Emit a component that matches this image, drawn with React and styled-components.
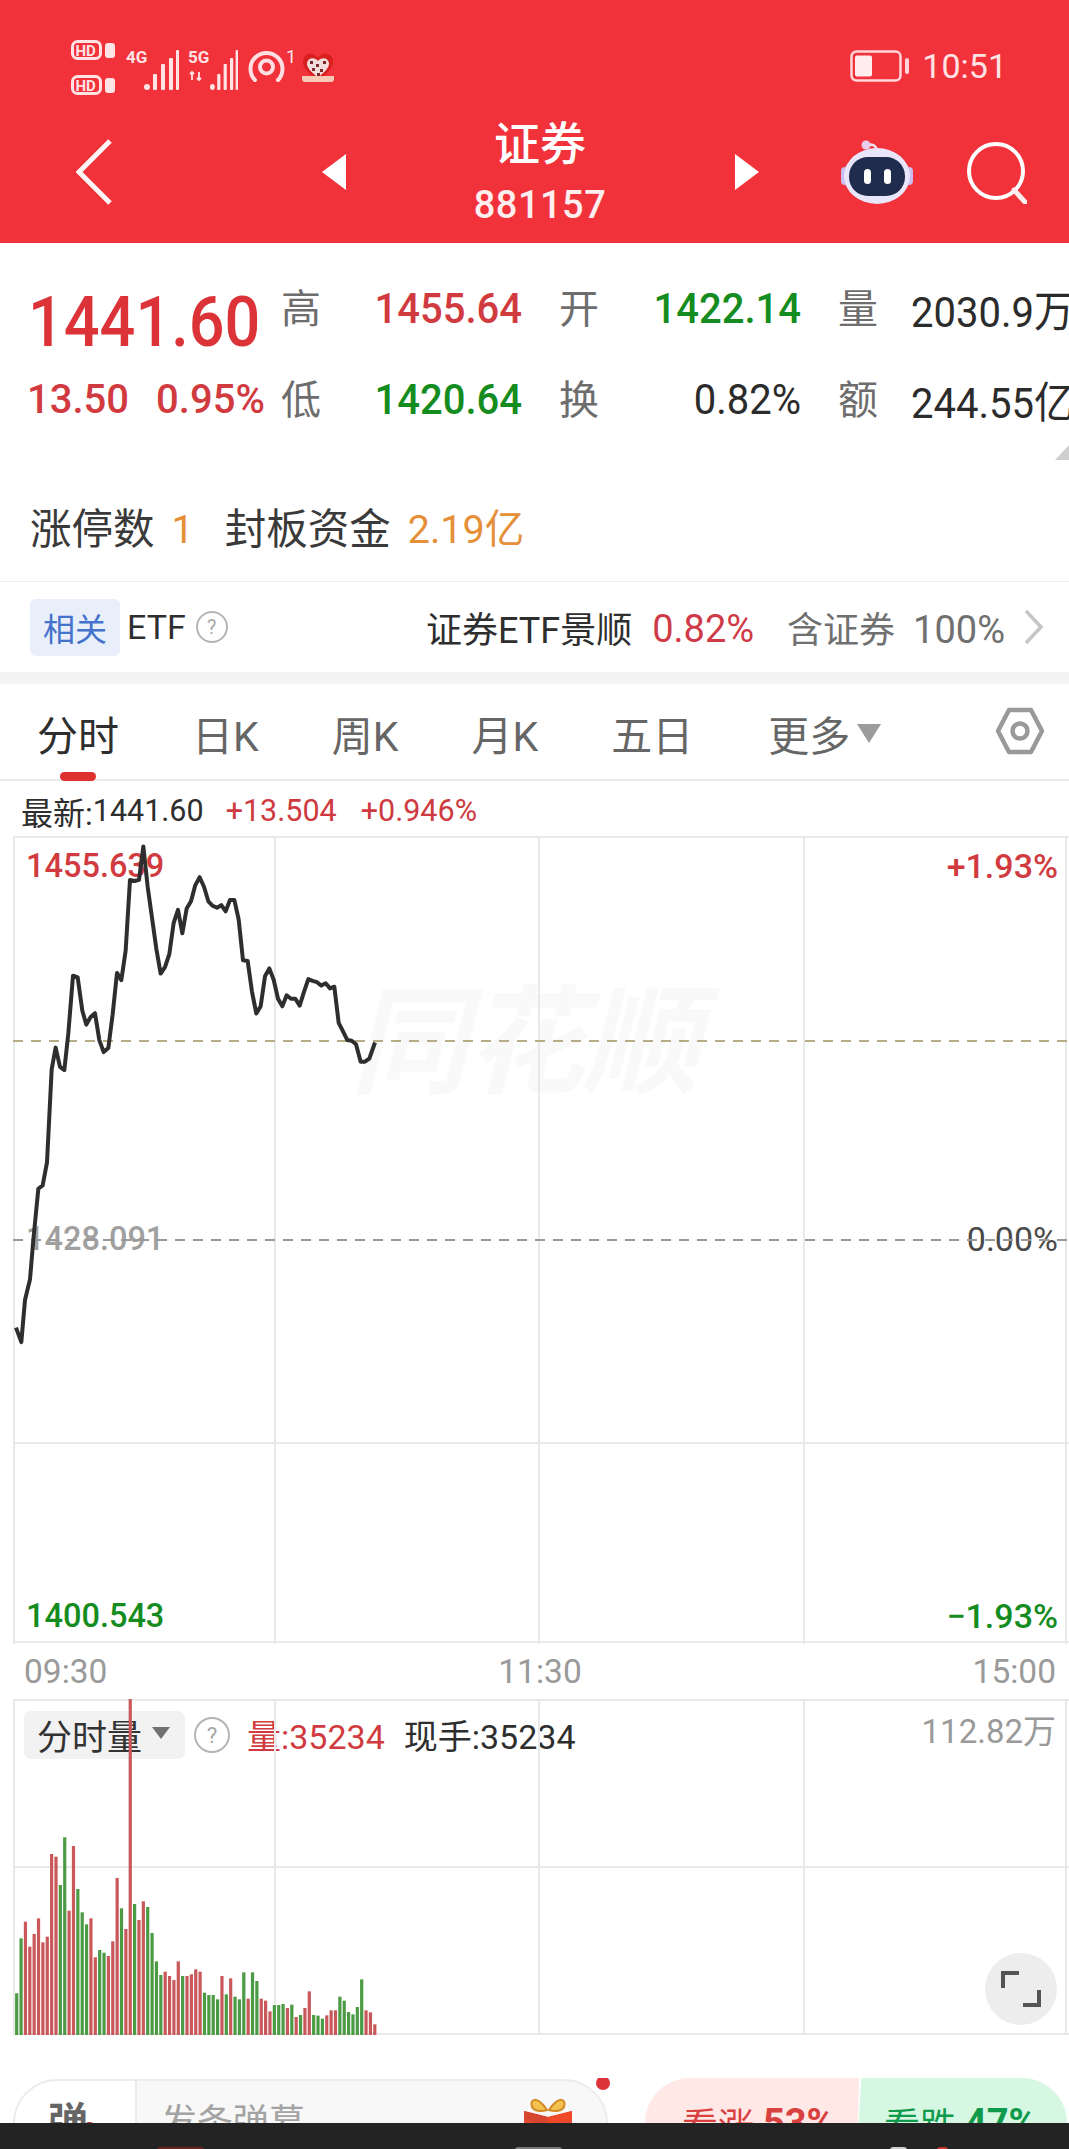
import React from 'react';
import styled, { createGlobalStyle } from 'styled-components';

const PRICE_POINTS = [
	[48, 1445], [64, 1487], [75, 1365], [90, 1305], [100, 1190], [115, 1042], [128, 1032], [141, 965], [155, 695], [167, 632],
	[180, 688], [193, 697], [205, 590], [219, 423], [233, 428], [247, 525], [259, 565], [272, 543], [285, 532], [298, 610],
	[311, 645], [325, 633], [338, 535], [351, 415], [364, 436], [377, 350], [390, 145], [404, 148], [417, 145], [430, 48],
	[443, 165], [456, 255], [469, 345], [482, 417], [495, 398], [508, 360], [521, 270], [534, 232], [547, 300], [560, 228],
	[573, 207], [586, 160], [599, 137], [612, 165], [625, 207], [638, 220], [651, 226], [664, 218], [677, 236], [690, 203],
	[703, 203], [716, 260], [729, 378], [743, 380], [756, 470], [769, 533], [782, 512], [795, 425], [808, 402], [821, 435],
	[834, 490], [847, 512], [860, 480], [873, 490], [886, 490], [899, 510], [912, 470], [925, 433], [938, 438], [951, 442],
	[964, 452], [977, 445], [990, 460], [1003, 455], [1016, 560], [1029, 585], [1042, 610], [1055, 612], [1068, 622],
	[1082, 673], [1095, 673], [1108, 664], [1125, 617],
];

// top of each volume bar, measured in thirds of a pixel from y=1840
const VOLUME_BARS = [
	[460, 'g'], [295, 'g'], [245, 'r'], [320, 'r'], [282, 'r'], [235, 'r'], [307, 'r'], [290, 'r'], [42, 'r'], [50, 'r'],
	[135, 'g'], [-8, 'g'], [212, 'r'], [18, 'r'], [147, 'g'], [217, 'g'], [253, 'g'], [235, 'r'], [352, 'r'], [330, 'g'],
	[338, 'g'], [348, 'r'], [304, 'r'], [114, 'r'], [205, 'g'], [267, 'r'], [-423, 'r'], [192, 'g'], [240, 'r'], [184, 'r'],
	[201, 'g'], [279, 'g'], [364, 'g'], [405, 'g'], [395, 'r'], [408, 'r'], [420, 'r'], [364, 'r'], [408, 'g'], [408, 'r'],
	[403, 'r'], [388, 'r'], [395, 'r'], [458, 'g'], [465, 'g'], [465, 'g'], [478, 'g'], [408, 'r'], [463, 'g'], [415, 'r'],
	[470, 'g'], [478, 'g'], [397, 'g'], [476, 'r'], [397, 'g'], [423, 'g'], [476, 'r'], [482, 'r'], [514, 'r'], [495, 'g'],
	[495, 'g'], [492, 'g'], [504, 'r'], [494, 'g'], [531, 'r'], [525, 'g'], [504, 'r'], [454, 'r'], [525, 'g'], [527, 'g'],
	[536, 'g'], [526, 'r'], [511, 'r'], [511, 'r'], [470, 'g'], [482, 'g'], [516, 'g'], [523, 'g'], [501, 'g'], [418, 'g'],
	[511, 'r'], [517, 'r'], [553, 'r'],
];

const GlobalStyle = createGlobalStyle`
	html, body {
		margin: 0;
		background: #fff;
	}
	body {
		font-family: Roboto, "Noto Sans CJK SC", sans-serif;
		color: #2b2b2b;
	}
`;

const Page = styled.div`
	width: 1069px;
	height: 2149px;
	overflow: hidden;
	background: #fff;
`;

const Header = styled.header`
	height: 243px;
	background: #f1323a;
	color: #fff;
`;

const StatusBar = styled.div`
	height: 100px;
	padding: 40px 62px 0 71px;
	box-sizing: border-box;
	display: flex;
	justify-content: space-between;
	align-items: flex-start;
`;

const StatusRight = styled.div`
	display: flex;
	align-items: center;
	gap: 12px;
	margin-top: 10px;
	font-size: 34px;
	color: #ffe3e5;
	line-height: 31px;
`;

const NavBar = styled.div`
	height: 143px;
	display: grid;
	grid-template-columns: 322px 23px 390px 24px 82px 71px 53px 62px;
	align-items: center;
`;

const BackCell = styled.div`
	padding-left: 76px;
	display: flex;
`;

const TitleBlock = styled.div`
	align-self: start;
	margin-top: 15px;
	text-align: center;
`;

const Title = styled.div`
	font-size: 46px;
	line-height: 58px;
	font-weight: 500;
`;

const Code = styled.div`
	margin-top: 10px;
	font-size: 38px;
	line-height: 44px;
	letter-spacing: 0.5px;
	font-weight: 500;
	color: #ffeef0;
`;

const Quote = styled.section`
	position: relative;
	box-sizing: border-box;
	height: 217px;
	padding-top: 20px;
	display: grid;
	grid-template-columns: 281px 278px 279px 1fr;
	grid-template-rows: 91px 91px;
	align-items: center;
	overflow: hidden;
`;

const BigPrice = styled.div`
	padding-left: 28px;
	margin-top: 26px;
	font-size: 63px;
	line-height: 60px;
	font-weight: 500;
	color: #dc3338;
	span {
		display: inline-block;
		transform: scaleY(1.13);
	}
`;

const ChangeRow = styled.div`
	padding-left: 27px;
	display: flex;
	gap: 27px;
	font-size: 40px;
	font-weight: 500;
	color: #d13b3f;
`;

const StatCell = styled.div`
	display: flex;
	align-items: center;
	padding-right: 37px;
	white-space: nowrap;
`;

const StatLabel = styled.span`
	font-size: 40px;
	margin-top: -5px;
	color: #6d6d6d;
	flex: none;
`;

const StatValue = styled.span`
	flex: 1;
	font-size: 40px;
	font-weight: ${(p) => (p.$color ? 500 : 400)};
	text-align: ${(p) => (p.$left ? 'left' : 'right')};
	margin-left: ${(p) => (p.$left ? '33px' : '0')};
	color: ${(p) => p.$color || '#2b2b2b'};
	transform: scaleY(1.08);
`;

const CornerMark = styled.div`
	position: absolute;
	right: 0;
	bottom: 0;
	width: 0;
	height: 0;
	border-left: 14px solid transparent;
	border-bottom: 15px solid #cfcfcf;
`;

const LimitRow = styled.div`
	height: 122px;
	box-sizing: border-box;
	padding: 40px 0 0 30px;
	display: flex;
	align-items: flex-start;
	font-size: 41.5px;
	line-height: 60px;
	color: #3a3a3a;
	border-bottom: 1px solid #eeeeee;
`;

const LimitValue = styled.span`
	font-size: 39.5px;
	color: #e58f38;
	margin: 0 31px 0 17px;
`;

const EtfRow = styled.div`
	height: 90px;
	padding: 0 24px 0 30px;
	display: flex;
	align-items: center;
	font-size: 36px;
	white-space: nowrap;
`;

const EtfTag = styled.span`
	width: 90px;
	height: 57px;
	display: flex;
	align-items: center;
	justify-content: center;
	background: #e8effb;
	border-radius: 6px;
	color: #4472cc;
	font-size: 32px;
`;

const EtfName = styled.span`
	margin-left: 7px;
	font-size: 34px;
	color: #2e2e2e;
`;

const HelpDot = styled.span`
	width: ${(p) => p.$size}px;
	height: ${(p) => p.$size}px;
	margin-left: ${(p) => p.$gap}px;
	flex: none;
	display: inline-flex;
	align-items: center;
	justify-content: center;
	box-sizing: border-box;
	border: 2px solid #b5b5b5;
	border-radius: 50%;
	color: #a8a8a8;
	font-size: ${(p) => p.$size * 0.62}px;
`;

const EtfFund = styled.span`
	margin-left: auto;
	color: #2e2e2e;
`;

const EtfChange = styled.span`
	margin: 4px 0 0 20px;
	font-size: 38px;
	color: #cf3a48;
`;

const EtfHolding = styled.span`
	margin-left: 33px;
	color: #707070;
	display: flex;
	align-items: center;
	gap: 18px;
`;

const EtfPercent = styled.span`
	margin-top: 5px;
	font-size: 38px;
`;

const EtfChevron = styled.svg`
	width: 22px;
	height: 36px;
	margin-left: 18px;
`;

const Strip = styled.div`
	height: 12px;
	background: #f4f4f4;
`;

const Tabs = styled.nav`
	height: 97px;
	box-sizing: border-box;
	padding: 0 24px 0 37px;
	display: flex;
	align-items: center;
	gap: 73px;
	border-bottom: 2px solid #ececec;
`;

const Tab = styled.span`
	position: relative;
	font-size: 41px;
	line-height: 56px;
	margin-top: 10px;
	color: ${(p) => (p.$active ? '#2e2e2e' : '#666666')};
	display: flex;
	align-items: center;
	gap: 7px;
	margin-left: ${(p) => p.$shift || 0}px;
	${(p) =>
		p.$active &&
		`
		&::after {
			content: '';
			position: absolute;
			left: 23px;
			bottom: -16px;
			width: 36px;
			height: 9px;
			border-radius: 5px;
			background: #df3030;
		}
	`}
`;

const TabCaret = styled.i`
	width: 0;
	height: 0;
	border-left: 12px solid transparent;
	border-right: 12px solid transparent;
	border-top: 19px solid #9c9c9c;
	margin-top: -6px;
`;

const SettingsIcon = styled.svg`
	width: 50px;
	height: 48px;
	margin-left: auto;
	margin-top: -2px;
`;

const InfoRow = styled.div`
	height: 55px;
	box-sizing: border-box;
	padding: 4px 0 0 21px;
	display: flex;
	align-items: center;
	font-size: 30.5px;
	white-space: nowrap;
	color: #2e2e2e;
`;

const InfoCjk = styled.span`
	font-size: 32px;
`;

const InfoChange = styled.span`
	color: #ce3a40;
	margin-left: ${(p) => p.$gap}px;
`;

const ChartBox = styled.div`
	position: relative;
	margin-left: 13px;
	width: 1056px;
	height: ${(p) => p.$height}px;
`;

const ChartSvg = styled.svg`
	position: absolute;
	inset: 0;
	width: 100%;
	height: 100%;
`;

const Watermark = styled.div`
	position: absolute;
	left: 337px;
	top: 138px;
	font-size: 118px;
	line-height: 140px;
	font-weight: 700;
	font-style: italic;
	letter-spacing: -2px;
	color: #f9f9f9;
`;

const AxisLabels = styled.div`
	position: absolute;
	top: 10px;
	bottom: 8px;
	${(p) => (p.$right ? 'right: 11px;' : 'left: 13px;')}
	display: flex;
	flex-direction: column;
	justify-content: space-between;
	align-items: ${(p) => (p.$right ? 'flex-end' : 'flex-start')};
	font-size: ${(p) => (p.$right ? 34 : 32.5)}px;
`;

const AxisLabel = styled.span`
	line-height: 40px;
	font-weight: ${(p) => (p.$dark ? 400 : 500)};
	margin-top: ${(p) => (p.$mid ? -4 : 0)}px;
	color: ${(p) => p.$color};
`;

const TimeRow = styled.div`
	height: 55px;
	padding: 0 13px 0 24px;
	display: flex;
	justify-content: space-between;
	align-items: center;
	font-size: 33.5px;
	color: #9a9a9a;
`;

const VolumeHead = styled.div`
	position: absolute;
	left: 11px;
	top: 11px;
	right: 13px;
	display: flex;
	align-items: center;
	font-size: 34px;
	white-space: nowrap;
`;

const VolumeSelect = styled.span`
	width: 161px;
	height: 48px;
	box-sizing: border-box;
	padding-left: 13px;
	display: flex;
	align-items: center;
	gap: 10px;
	background: #f2f2f2;
	border-radius: 7px;
	color: #333333;
	font-size: 35px;
`;

const SelectCaret = styled.i`
	width: 0;
	height: 0;
	border-left: 9px solid transparent;
	border-right: 9px solid transparent;
	border-top: 12px solid #707070;
	margin-top: -4px;
`;

const VolumeValue = styled.span`
	margin-left: ${(p) => p.$gap}px;
	color: ${(p) => p.$color};
`;

const VolumeMax = styled.span`
	margin-left: auto;
	margin-top: -12px;
	font-size: 33px;
	color: #9a9a9a;
`;

const ExpandButton = styled.div`
	position: absolute;
	left: 972px;
	top: 254px;
	width: 72px;
	height: 72px;
	border-radius: 50%;
	background: #ededed;
	display: flex;
	align-items: center;
	justify-content: center;
`;

const ActionRow = styled.div`
	height: 45px;
	margin-top: 43px;
	padding: 0 2px 0 13px;
	display: flex;
	justify-content: space-between;
	overflow: hidden;
`;

const DanmuPill = styled.div`
	position: relative;
	width: 595px;
	height: 90px;
	margin-top: 1px;
	box-sizing: border-box;
	border: 2px solid #ececec;
	border-radius: 44px;
	display: flex;
	background: #f8f8f8;
`;

const DanmuBadge = styled.div`
	position: relative;
	width: 122px;
	box-sizing: border-box;
	padding-left: 33px;
	background: #fff;
	border-right: 2px solid #ececec;
	border-radius: 44px 0 0 44px;
	font-size: 40px;
	line-height: 84px;
	font-weight: 700;
	color: #666666;
	&::after {
		content: '';
		position: absolute;
		left: 67px;
		top: 41px;
		width: 15px;
		height: 15px;
		border-radius: 50%;
		background: #b3322e;
	}
`;

const DanmuHint = styled.div`
	padding-left: 24px;
	font-size: 36px;
	line-height: 84px;
	color: #a3a3a3;
`;

const GiftIcon = styled.svg`
	position: absolute;
	right: 33px;
	top: 12px;
	width: 50px;
	height: 64px;
`;

const NoticeDot = styled.i`
	position: absolute;
	left: 581px;
	top: -5px;
	width: 14px;
	height: 14px;
	border-radius: 50%;
	background: #dc3338;
`;

const VoteGroup = styled.div`
	width: 422px;
	display: flex;
`;

const VoteButton = styled.div`
	height: 90px;
	box-sizing: border-box;
	display: flex;
	align-items: center;
	gap: 9px;
	font-size: 36px;
	white-space: nowrap;
	${(p) =>
		p.$up
			? `
		width: 214px;
		padding-left: 37px;
		color: #d8413f;
		background: #ffe8e6;
		border-radius: 45px 0 0 45px;
		clip-path: polygon(0 0, 100% 0, 99% 100%, 0 100%);
	`
			: `
		width: 211px;
		margin-left: -3px;
		padding-left: 28px;
		color: #109a4c;
		background: #d6f7e2;
		border-radius: 0 45px 45px 0;
		clip-path: polygon(2.5% 0, 100% 0, 100% 100%, 0 100%);
	`}
	b {
		font-size: 38px;
		font-weight: 700;
	}
`;

const BottomBar = styled.div`
	position: relative;
	height: 26px;
	overflow: hidden;
	background: #232323;
`;

const BarGlyph = styled.i`
	position: absolute;
	left: ${(p) => p.$left}px;
	top: 24px;
	width: ${(p) => p.$width}px;
	height: 6px;
	border-radius: 3px 3px 0 0;
	background: ${(p) => p.$color};
`;

const SignalBars = () => (
	<g fill="#ffe3e5">
		<circle cx="3" cy="37" r="3" />
		<rect x="9" y="24" width="4" height="16" rx="1" />
		<rect x="17" y="14" width="4" height="26" rx="1" />
		<rect x="25" y="8" width="4" height="32" rx="1" />
		<rect x="32" y="0" width="3" height="40" rx="1" />
	</g>
);

const StatusIcons = () => (
	<svg width="270" height="60" viewBox="0 0 270 60">
		<g fill="none" stroke="#ffe3e5" strokeWidth="3">
			<rect x="1.5" y="1.5" width="28" height="17" rx="5" />
			<rect x="1.5" y="36.5" width="28" height="17" rx="5" />
		</g>
		<g fill="#ffe3e5" fontFamily="Roboto, sans-serif" fontWeight="700">
			<text x="4.500" y="15.500" fontSize="15">HD</text>
			<text x="4.500" y="50.500" fontSize="15">HD</text>
			<rect x="34" y="3" width="10" height="15" rx="3" />
			<rect x="34" y="38" width="10" height="15" rx="3" />
			<text x="55" y="23" fontSize="17">4G</text>
			<text x="117" y="23" fontSize="17">5G</text>
			<text x="215" y="23" fontSize="18" fontWeight="400">1</text>
		</g>
		<g transform="translate(73 10)">
			<SignalBars />
		</g>
		<g transform="translate(139 10) scale(0.8 1)">
			<SignalBars />
		</g>
		<path d="M121 32v8M119 34l2-2 2 2M128 32v8M126 38l2 2 2-2" stroke="#ffe3e5" strokeWidth="1.800" fill="none" />
		<g fill="none" stroke="#ffdfe3" strokeLinecap="round">
			<path d="M184 40a16 16 0 1 1 23 0" strokeWidth="4" />
			<circle cx="195.500" cy="27" r="6.500" strokeWidth="4" />
		</g>
		<g transform="translate(231 12)">
			<path d="M16 6C12 0 2 0 1 9c-1 7 7 13 15 20 8-7 16-13 15-20C30 0 20 0 16 6z" fill="#d8201f" />
			<path d="M16 9c-3-4-10-4-11 2-.6 5 5 9 11 15 6-6 11.600-10 11-15-1-6-8-6-11-2z" fill="#f3dcdc" />
			<g fill="#7a2a2a">
				<rect x="8" y="9" width="3" height="3" /><rect x="14" y="12" width="3" height="3" />
				<rect x="21" y="9" width="3" height="3" /><rect x="10" y="16" width="3" height="3" />
				<rect x="18" y="17" width="3" height="3" /><rect x="15" y="21" width="3" height="3" />
			</g>
			<path d="M0 24h32v3q0 3-3 3H3q-3 0-3-3z" fill="#f9c9b8" />
		</g>
	</svg>
);

const Battery = () => (
	<svg width="60" height="32" viewBox="0 0 60 32">
		<rect x="1.500" y="1.500" width="49" height="29" rx="5" fill="none" stroke="#ffd6da" strokeWidth="2.500" />
		<rect x="5" y="5.500" width="17" height="21" rx="2" fill="#ffecee" />
		<rect x="55" y="8" width="4" height="16" rx="2" fill="#ffd6da" />
	</svg>
);

const BackIcon = () => (
	<svg width="36" height="66" viewBox="0 0 36 66" style={{ display: 'block' }}>
		<path d="M34 2L3 33l31 31" fill="none" stroke="#fff4f4" strokeWidth="5" />
	</svg>
);

const Triangle = ({ flip }) => (
	<svg width="24" height="36" viewBox="0 0 24 36" style={{ display: 'block' }}>
		<path d={flip ? 'M0 0l24 18L0 36z' : 'M24 0L0 18l24 18z'} fill="#fff" />
	</svg>
);

const RobotIcon = () => (
	<svg width="72" height="66" viewBox="0 0 72 66" style={{ display: 'block' }}>
		<path d="M26 8c3-4 9-3 10 4" fill="none" stroke="#f1e4f4" strokeWidth="2.500" />
		<circle cx="25" cy="6" r="4.500" fill="#eacdea" />
		<rect x="0" y="28" width="8" height="18" rx="4" fill="#cbbdf0" />
		<rect x="64" y="28" width="8" height="18" rx="4" fill="#cbbdf0" />
		<ellipse cx="36" cy="37" rx="33" ry="28" fill="#e9e6fb" />
		<rect x="8" y="18" width="56" height="39" rx="19" fill="#1f2c4d" />
		<rect x="23" y="30" width="7" height="15" rx="3.500" fill="#fff" />
		<rect x="43" y="30" width="7" height="15" rx="3.500" fill="#fff" />
	</svg>
);

const SearchIcon = () => (
	<svg width="62" height="64" viewBox="0 0 62 64" style={{ display: 'block' }}>
		<circle cx="31" cy="31" r="27" fill="none" stroke="#fff" strokeWidth="4" />
		<path d="M49 50l11 12" stroke="#ffecee" strokeWidth="5" strokeLinecap="round" />
	</svg>
);

const GridLines = ({ rows, height, dashes }) => (
	<g stroke="#e9e9e9" strokeWidth="2">
		{[1, 262, 526, 791, 1053].map((x) => (
			<line key={x} x1={x} y1="0" x2={x} y2={height} />
		))}
		{rows.map((y) => (
			<line key={y} x1="0" y1={y} x2="1056" y2={y} />
		))}
		{dashes}
	</g>
);

const App = () => {
	const pricePath = PRICE_POINTS.map(([x, y]) => `${x / 3 - 13},${(830 + y / 2.904 - 836).toFixed(1)}`).join(' ');

	return (
		<Page>
			<GlobalStyle />
			<Header>
				<StatusBar>
					<StatusIcons />
					<StatusRight>
						<Battery />
						<span>10:51</span>
					</StatusRight>
				</StatusBar>
				<NavBar>
					<BackCell><BackIcon /></BackCell>
					<Triangle />
					<TitleBlock>
						<Title>证券</Title>
						<Code>881157</Code>
					</TitleBlock>
					<Triangle flip />
					<span />
					<RobotIcon />
					<span />
					<SearchIcon />
				</NavBar>
			</Header>

			<Quote>
				<BigPrice><span>1441.60</span></BigPrice>
				<StatCell>
					<StatLabel>高</StatLabel>
					<StatValue $color="#d13b3f">1455.64</StatValue>
				</StatCell>
				<StatCell>
					<StatLabel>开</StatLabel>
					<StatValue $color="#158c20">1422.14</StatValue>
				</StatCell>
				<StatCell>
					<StatLabel>量</StatLabel>
					<StatValue $left>2030.9万</StatValue>
				</StatCell>
				<ChangeRow>
					<span>13.50</span>
					<span>0.95%</span>
				</ChangeRow>
				<StatCell>
					<StatLabel>低</StatLabel>
					<StatValue $color="#158c20">1420.64</StatValue>
				</StatCell>
				<StatCell>
					<StatLabel>换</StatLabel>
					<StatValue>0.82%</StatValue>
				</StatCell>
				<StatCell>
					<StatLabel>额</StatLabel>
					<StatValue $left>244.55亿</StatValue>
				</StatCell>
				<CornerMark />
			</Quote>

			<LimitRow>
				<span>涨停数</span>
				<LimitValue>1</LimitValue>
				<span>封板资金</span>
				<LimitValue>2.19亿</LimitValue>
			</LimitRow>

			<EtfRow>
				<EtfTag>相关</EtfTag>
				<EtfName>ETF</EtfName>
				<HelpDot $size={32} $gap={10}>?</HelpDot>
				<EtfFund>证券ETF景顺</EtfFund>
				<EtfChange>0.82%</EtfChange>
				<EtfHolding>
					<span>含证券</span>
					<EtfPercent>100%</EtfPercent>
				</EtfHolding>
				<EtfChevron viewBox="0 0 22 36">
					<path d="M3 2l15 16L3 34" fill="none" stroke="#c6c6c6" strokeWidth="3.500" />
				</EtfChevron>
			</EtfRow>

			<Strip />

			<Tabs>
				<Tab $active>分时</Tab>
				<Tab>日K</Tab>
				<Tab>周K</Tab>
				<Tab>月K</Tab>
				<Tab>五日</Tab>
				<Tab $shift={2}>更多<TabCaret /></Tab>
				<SettingsIcon viewBox="0 0 50 48">
					<path d="M14 3h22l11 21-11 21H14L3 24z" fill="none" stroke="#999" strokeWidth="4.500" strokeLinejoin="round" />
					<circle cx="25" cy="24" r="7.500" fill="none" stroke="#999" strokeWidth="4.500" />
				</SettingsIcon>
			</Tabs>

			<InfoRow>
				<InfoCjk>最新:</InfoCjk>
				<span>1441.60</span>
				<InfoChange $gap={22}>+13.504</InfoChange>
				<InfoChange $gap={24}>+0.946%</InfoChange>
			</InfoRow>

			<ChartBox $height={808}>
				<Watermark>同花顺</Watermark>
				<AxisLabels>
					<AxisLabel $color="#d13b3f">1455.639</AxisLabel>
					<AxisLabel $mid $color="#a0a0a0">1428.091</AxisLabel>
					<AxisLabel $color="#158c20">1400.543</AxisLabel>
				</AxisLabels>
				<AxisLabels $right>
					<AxisLabel $color="#d13b3f">+1.93%</AxisLabel>
					<AxisLabel $mid $dark $color="#4a4a4a">0.00%</AxisLabel>
					<AxisLabel $color="#158c20">−1.93%</AxisLabel>
				</AxisLabels>
				<ChartSvg viewBox="0 0 1056 808">
					<GridLines
						rows={[1, 607, 806]}
						height={808}
						dashes={
							<>
								<line x1="0" y1="205" x2="1056" y2="205" stroke="#b7ad84" strokeDasharray="10 8" />
								<line x1="0" y1="404" x2="1056" y2="404" stroke="#999999" strokeDasharray="10 8" />
							</>
						}
					/>
					<polyline points={pricePath} fill="none" stroke="#2e2e2e" strokeWidth="4" strokeLinejoin="round" />
				</ChartSvg>
			</ChartBox>

			<TimeRow>
				<span>09:30</span>
				<span>11:30</span>
				<span>15:00</span>
			</TimeRow>

			<ChartBox $height={336}>
				<VolumeHead>
					<VolumeSelect>分时量<SelectCaret /></VolumeSelect>
					<HelpDot $size={36} $gap={9}>?</HelpDot>
					<VolumeValue $gap={17} $color="#d13b3f">量:35234</VolumeValue>
					<VolumeValue $gap={19} $color="#2e2e2e">现手:35234</VolumeValue>
					<VolumeMax>112.82万</VolumeMax>
				</VolumeHead>
				<ChartSvg viewBox="0 0 1056 336">
					<GridLines rows={[1, 168, 335]} height={336} />
					{VOLUME_BARS.map(([top, side], i) => {
						const x = 16.7 - 13 - 1.6 + i * 4.367;
						const y = 141 + top / 3;
						return <rect key={i} x={x} y={y} width="3.200" height={336 - y} fill={side === 'g' ? '#4b9a44' : '#c9585a'} />;
					})}
				</ChartSvg>
				<ExpandButton>
					<svg width="40" height="36" viewBox="0 0 40 36">
						<path d="M2 17V2h16M38 19v15H22" fill="none" stroke="#555" strokeWidth="4" />
					</svg>
				</ExpandButton>
			</ChartBox>

			<ActionRow>
				<DanmuPill>
					<DanmuBadge>弹</DanmuBadge>
					<DanmuHint>发条弹幕</DanmuHint>
					<GiftIcon viewBox="0 0 50 64">
						<path d="M24 17C14 2 6 6 9 14c2 4 9 5 15 3zM26 17C36 2 44 6 41 14c-2 4-9 5-15 3z" fill="#f2c14e" stroke="#d28a26" strokeWidth="2" />
						<path d="M1 18l24 6 24-6v40H1z" fill="#e94a30" />
						<path d="M25 24l24-6v8L25 33z" fill="#f0492a" />
						<path d="M25 24L1 18v8l24 7z" fill="#d6452d" />
					</GiftIcon>
					<NoticeDot />
				</DanmuPill>
				<VoteGroup>
					<VoteButton $up>看涨<b>53%</b></VoteButton>
					<VoteButton>看跌<b>47%</b></VoteButton>
				</VoteGroup>
			</ActionRow>

			<BottomBar>
				<BarGlyph $left={157} $width={47} $color="#6b2420" />
				<BarGlyph $left={515} $width={47} $color="#7a7a7a" />
				<BarGlyph $left={890} $width={17} $color="#cfcfcf" />
				<BarGlyph $left={937} $width={11} $color="#c8342f" />
			</BottomBar>
		</Page>
	);
};

export default App;
